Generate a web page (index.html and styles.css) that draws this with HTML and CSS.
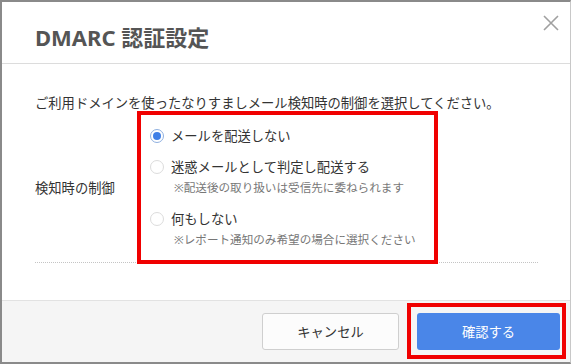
FILE: index.html
```html
<!DOCTYPE html>
<html lang="ja">
<head>
<meta charset="utf-8">
<title>DMARC 認証設定</title>
<link rel="stylesheet" href="styles.css">
</head>
<body>
<div class="dialog">
  <div class="dialog-header">
    <h1 class="dialog-title">DMARC 認証設定</h1>
    <button class="close-btn" aria-label="閉じる">
      <svg width="18" height="18" viewBox="0 0 18 18"><path d="M2 2 L16 16 M16 2 L2 16" stroke="#a0a0a0" stroke-width="1.6" fill="none"/></svg>
    </button>
  </div>
  <div class="dialog-body">
    <p class="intro">ご利用ドメインを使ったなりすましメール検知時の制御を選択してください。</p>
    <div class="form-row">
      <div class="form-label">検知時の制御</div>
      <div class="options highlight-options">
        <label class="option">
          <span class="radio checked"></span>
          <span class="option-text">メールを配送しない</span>
        </label>
        <div class="option-group">
          <label class="option">
            <span class="radio"></span>
            <span class="option-text">迷惑メールとして判定し配送する</span>
          </label>
          <div class="note">※配送後の取り扱いは受信先に委ねられます</div>
        </div>
        <div class="option-group">
          <label class="option">
            <span class="radio"></span>
            <span class="option-text">何もしない</span>
          </label>
          <div class="note">※レポート通知のみ希望の場合に選択ください</div>
        </div>
      </div>
    </div>
  </div>
  <div class="dialog-footer">
    <button class="btn btn-cancel">キャンセル</button>
    <div class="highlight-btn">
      <button class="btn btn-primary">確認する</button>
    </div>
  </div>
</div>
</body>
</html>
```
FILE: styles.css
```css
* { box-sizing: border-box; }
html, body { margin: 0; padding: 0; background: #fff; }
body {
  font-family: "Noto Sans", "Noto Sans CJK JP", sans-serif;
  color: #333;
  font-size: 13.3px;
}
.dialog {
  width: 571px;
  height: 364px;
  border-left: 2px solid #8a8a8a;
  border-top: 2px solid #8a8a8a;
  border-bottom: 2px solid #8a8a8a;
  border-right: 1px solid #c8c8c8;
  display: flex;
  flex-direction: column;
  background: #fff;
}
.dialog-header {
  height: 62px;
  flex: none;
  border-bottom: 1px solid #dcdcdc;
  display: flex;
  justify-content: space-between;
  align-items: flex-start;
  padding: 0 10px 0 33px;
}
.dialog-title {
  margin: 0;
  padding-top: 20px;
  font-size: 22px;
  line-height: 30px;
  font-weight: 700;
  color: #555;
}
.close-btn {
  margin-top: 12px;
  width: 18px;
  height: 18px;
  padding: 0;
  border: 0;
  background: none;
  display: block;
}
.close-btn svg { display: block; }
.dialog-body {
  flex: 1;
  padding: 29px 32px 0 33px;
}
.intro {
  margin: 0;
  line-height: 20px;
  color: #333;
}
.form-row {
  display: flex;
  align-items: center;
  padding: 13px 0 12px;
  border-bottom: 1px dotted #c4c4c4;
}
.form-label {
  width: 115px;
  flex: none;
  line-height: 20px;
}
.options {
  width: 275px;
  display: flex;
  flex-direction: column;
  gap: 11px;
  position: relative;
}
.highlight-options::after {
  content: "";
  position: absolute;
  left: -13px;
  right: -13px;
  top: -15px;
  bottom: -14px;
  border: 4px solid #f00000;
  pointer-events: none;
}
.option {
  display: flex;
  align-items: center;
  gap: 7px;
  line-height: 20px;
}
.radio {
  width: 14px;
  height: 14px;
  border-radius: 50%;
  border: 1px solid #dcdcdc;
  background: #fff;
  flex: none;
  position: relative;
}
.radio.checked {
  border-color: #8fb0e0;
  background: #fff;
}
.radio.checked::after {
  content: "";
  position: absolute;
  left: 2px;
  top: 2px;
  width: 8px;
  height: 8px;
  border-radius: 50%;
  background: #3f7fe6;
}
.note {
  padding-left: 24px;
  font-size: 11.6px;
  line-height: 21px;
  color: #777;
}
.dialog-footer {
  height: 62px;
  flex: none;
  background: #f5f5f5;
  border-top: 1px solid #e2e2e2;
  display: flex;
  justify-content: flex-end;
  align-items: center;
  gap: 18px;
  padding: 0 10px 0 0;
}
.btn {
  height: 37px;
  border-radius: 3px;
  font-family: inherit;
  font-size: 13.3px;
  display: block;
}
.btn-cancel {
  width: 137px;
  background: #fcfcfc;
  border: 1px solid #cfcfcf;
  color: #333;
}
.btn-primary {
  width: 143px;
  background: #4a86e8;
  border: 0;
  color: #fff;
}
.highlight-btn {
  position: relative;
}
.highlight-btn::after {
  content: "";
  position: absolute;
  left: -10px;
  right: -6px;
  top: -10px;
  bottom: -9px;
  border: 4px solid #f00000;
  pointer-events: none;
}
```
